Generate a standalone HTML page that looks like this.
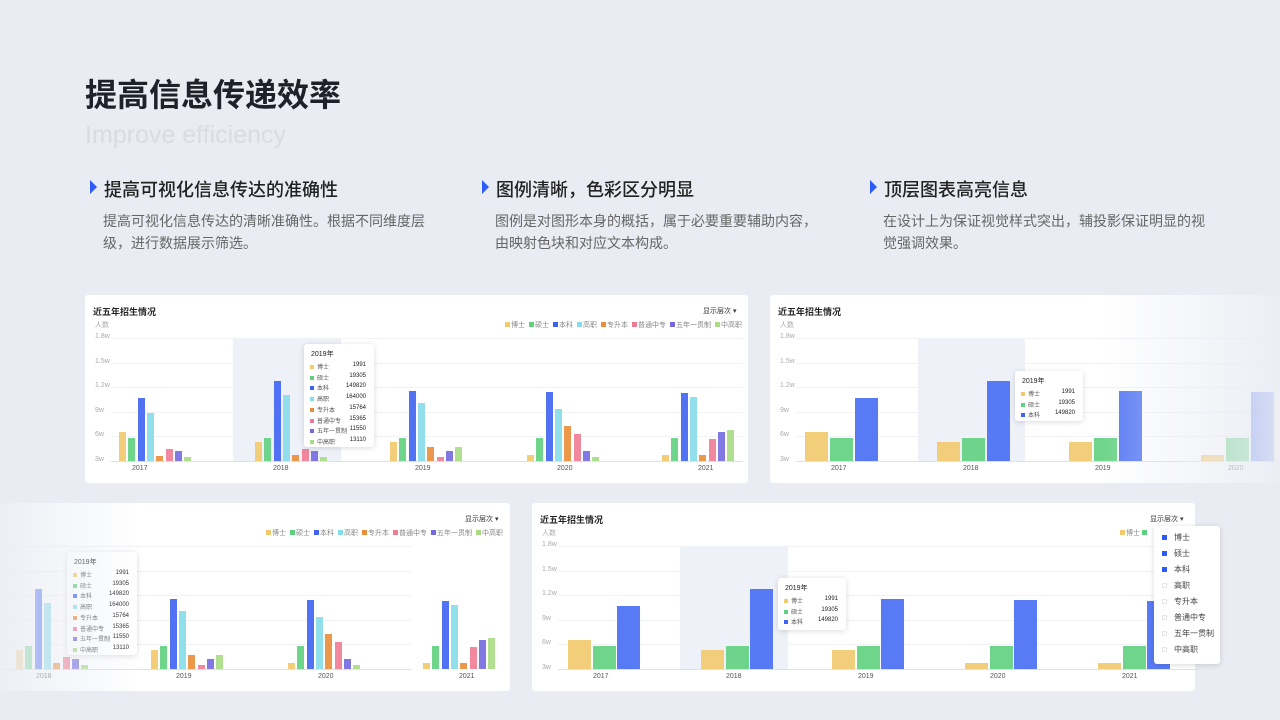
<!DOCTYPE html><html><head><meta charset="utf-8"><style>
*{margin:0;padding:0;box-sizing:border-box}
html,body{width:1280px;height:720px;overflow:hidden}
body{background:#e9ecf3;font-family:"Liberation Sans","Noto Sans CJK SC",sans-serif;position:relative}
.a{position:absolute;white-space:nowrap}
.card{position:absolute;background:#fff;border-radius:3px}
.t{font-size:9px;font-weight:bold;color:#222}
.s{font-size:7px;color:#aaa}
.g{position:absolute;height:1px;background:#f1f2f5}
.bar{position:absolute}
.tip{position:absolute;background:#fff;border-radius:3px;box-shadow:0 1px 6px rgba(0,0,0,.15);font-size:6px;color:#555}
h2{position:absolute;font-size:18px;font-weight:500;color:#222}
p.d{position:absolute;font-size:14px;color:#666;line-height:22px;white-space:normal}
.tri{position:absolute;width:0;height:0;border-left:7px solid #2d5bff;border-top:7px solid transparent;border-bottom:7px solid transparent}
</style></head><body>
<div class="a" style="left:85px;top:70px;font-size:32px;font-weight:bold;color:#1e2129">提高信息传递效率</div>
<div class="a" style="left:85px;top:121px;font-size:25px;color:#d9dce3">Improve efficiency</div>

<div class="tri" style="left:90px;top:180px"></div><h2 style="left:104px;top:176px">提高可视化信息传达的准确性</h2>
<p class="d" style="left:103px;top:210px;width:330px">提高可视化信息传达的清晰准确性。根据不同维度层级，进行数据展示筛选。</p>
<div class="tri" style="left:482px;top:180px"></div><h2 style="left:496px;top:176px">图例清晰，色彩区分明显</h2>
<p class="d" style="left:495px;top:210px;width:325px">图例是对图形本身的概括，属于必要重要辅助内容，由映射色块和对应文本构成。</p>
<div class="tri" style="left:870px;top:180px"></div><h2 style="left:884px;top:176px">顶层图表高亮信息</h2>
<p class="d" style="left:883px;top:210px;width:325px">在设计上为保证视觉样式突出，辅投影保证明显的视觉强调效果。</p>

<div class="card" style="left:85px;top:295px;width:663px;height:188px"></div>
<div class="card" style="left:770px;top:295px;width:510px;height:188px"></div>
<div class="card" style="left:0px;top:503px;width:510px;height:188px"></div>
<div class="card" style="left:532px;top:503px;width:663px;height:188px"></div>
<div id="c"></div>
<div class="a" style="left:1100px;top:295px;width:180px;height:188px;background:linear-gradient(90deg,rgba(233,236,243,0),rgba(233,236,243,.9))"></div>
<div class="a" style="left:0;top:503px;width:140px;height:188px;background:linear-gradient(270deg,rgba(233,236,243,0),rgba(233,236,243,.85))"></div>
<div id="top"></div>
<script>
var C=['#f2c96b','#5fd07e','#3f63f3','#86dcea','#e98d3a','#ef7b92','#7469e0','#a7dc83'];
var N=['博士','硕士','本科','高职','专升本','普通中专','五年一贯制','中高职'];
var V=['1991','19305','149820','164000','15764','15365','11550','13110'];
var H=[[432,438,398,413,456,449,451,457],[442,438,381,395,455,449,451,457],[442,438,391,403,447,457,451,447],[455,438,392,409,426,434,451,457],[455,438,393,397,455,439,432,430]];
var o='';
function chart(cfg){
 var dy=cfg.dy;
 if(cfg.title)o+='<div class="a t" style="left:'+(cfg.tx)+'px;top:'+(cfg.ty)+'px">近五年招生情况</div>';
 o+='<div class="a" style="left:'+cfg.sx+'px;top:'+(cfg.ty+1)+'px;font-size:7px;color:#333">显示层次 ▾</div>';
 o+='<div class="a s" style="left:'+(cfg.ax)+'px;top:'+(320+dy)+'px">人数</div>';
 if(cfg.hl)o+='<div class="a" style="left:'+cfg.hl[0]+'px;top:'+(338+dy)+'px;width:'+(cfg.hl[1]-cfg.hl[0])+'px;height:123px;background:#eef1f8"></div>';
 var L=['1.8w','1.5w','1.2w','9w','6w','3w'];
 for(var i=0;i<6;i++){var y=338+i*24.6+dy;o+='<div class="g" style="left:'+(cfg.ax+16)+'px;top:'+y+'px;width:'+cfg.gw+'px;'+(i==5?'background:#dfe1e6':'')+'"></div><div class="a s" style="left:'+cfg.ax+'px;top:'+(y-5)+'px">'+L[i]+'</div>';}
 for(var g=0;g<5;g++){var x0=cfg.gx[g];if(x0==null)continue;
  for(var b=0;b<cfg.nb;b++){var h=H[g][b];var top=h+dy;var bx=x0+b*cfg.step;
   var col=C[b];if(cfg.nb==3&&b==2)col='#466cf4';
   o+='<div class="bar" style="left:'+bx+'px;top:'+top+'px;width:'+cfg.bw+'px;height:'+(461+dy-top)+'px;background:'+col+';opacity:.9"></div>';}
  o+='<div class="a s" style="left:'+(cfg.yl[g]-9)+'px;top:'+(465+dy)+'px;color:#555">'+(2017+g)+'</div>';}
 if(cfg.leg){var lx=cfg.leg;var s='';for(var i=0;i<8;i++)s+='<span style="display:inline-block;width:5px;height:5px;background:'+C[i]+';margin:0 1px 0 4px"></span>'+N[i];o+='<div class="a" style="right:'+(1280-lx)+'px;top:'+(320+dy)+'px;font-size:7px;color:#888">'+s+'</div>';}
 if(cfg.tip){var t=cfg.tip,n=cfg.tn;var s='<div class="tip" style="left:'+t[0]+'px;top:'+t[1]+'px;width:'+t[2]+'px;height:'+t[3]+'px"><div class="a" style="left:7px;top:5px;font-size:7px;color:#222">2019年</div>';
  for(var i=0;i<n;i++)s+='<div class="a" style="left:6px;top:'+(18+i*10.7)+'px"><span style="display:inline-block;width:4px;height:4px;background:'+C[i]+';margin-right:3px"></span>'+N[i]+'</div><div class="a" style="right:8px;top:'+(18+i*10.7)+'px;color:#222">'+V[i]+'</div>';
  o+=s+'</div>';}
}
chart({dy:0,title:1,tx:93,ty:305,sx:703,ax:95,gw:632,hl:[233,341],nb:8,step:9.3,bw:7,gx:[119,255,390,527,662],yl:[141,282,424,566,707],leg:742,tip:[304,344,70,103],tn:8});
chart({dy:0,title:1,tx:778,ty:305,sx:2000,ax:780,gw:480,hl:[918,1025],nb:3,step:25,bw:23,gx:[805,937,1069,1201,null],yl:[840,972,1104,1237,0],tip:[1015,371,68,50],tn:3});
chart({dy:208,title:0,tx:0,ty:513,sx:465,ax:-100,gw:495,nb:8,step:9.3,bw:7,gx:[null,16,151,288,423],yl:[0,45,185,327,468],leg:503,tip:[67,552,70,103],tn:8});
chart({dy:208,title:1,tx:540,ty:513,sx:1150,ax:542,gw:640,hl:[680,788],nb:3,step:24.5,bw:23,gx:[568,701,832,965,1098],yl:[602,735,867,999,1131],tip:[778,578,68,52],tn:3});
document.getElementById('c').innerHTML=o;
var p='<div class="a" style="left:1120px;top:528px;font-size:7px;color:#888"><span style="display:inline-block;width:5px;height:5px;background:#f2c96b;margin-right:1px"></span>博士 <span style="display:inline-block;width:5px;height:5px;background:#5fd07e"></span></div>';
p+='<div class="tip" style="left:1154px;top:526px;width:66px;height:138px">';
for(var i=0;i<8;i++){var ck=i<3;p+='<div class="a" style="left:8px;top:'+(6+i*16)+'px;font-size:8px;color:#444"><span style="display:inline-block;width:5px;height:5px;margin-right:7px;'+(ck?'background:#2d5bff':'border:1px solid #e3e5ea')+'"></span>'+N[i]+'</div>';}
p+='</div>';
document.getElementById('top').innerHTML=p;
</script>
</body></html>
